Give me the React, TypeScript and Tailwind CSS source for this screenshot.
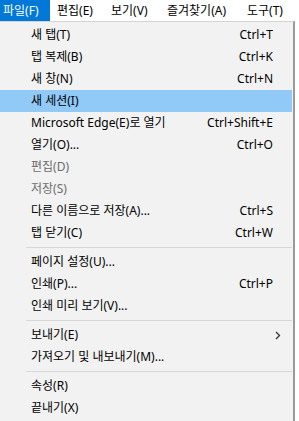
const font = { fontFamily: '"Noto Sans", "Noto Sans CJK KR", sans-serif' }

type Item =
  | { kind: 'item'; label: string; shortcut?: string; disabled?: boolean; active?: boolean; submenu?: boolean }
  | { kind: 'sep' }

const items: Item[] = [
  { kind: 'item', label: '새 탭(T)', shortcut: 'Ctrl+T' },
  { kind: 'item', label: '탭 복제(B)', shortcut: 'Ctrl+K' },
  { kind: 'item', label: '새 창(N)', shortcut: 'Ctrl+N' },
  { kind: 'item', label: '새 세션(I)', active: true },
  { kind: 'item', label: 'Microsoft Edge(E)로 열기', shortcut: 'Ctrl+Shift+E' },
  { kind: 'item', label: '열기(O)...', shortcut: 'Ctrl+O' },
  { kind: 'item', label: '편집(D)', disabled: true },
  { kind: 'item', label: '저장(S)', disabled: true },
  { kind: 'item', label: '다른 이름으로 저장(A)...', shortcut: 'Ctrl+S' },
  { kind: 'item', label: '탭 닫기(C)', shortcut: 'Ctrl+W' },
  { kind: 'sep' },
  { kind: 'item', label: '페이지 설정(U)...' },
  { kind: 'item', label: '인쇄(P)...', shortcut: 'Ctrl+P' },
  { kind: 'item', label: '인쇄 미리 보기(V)...' },
  { kind: 'sep' },
  { kind: 'item', label: '보내기(E)', submenu: true },
  { kind: 'item', label: '가져오기 및 내보내기(M)...' },
  { kind: 'sep' },
  { kind: 'item', label: '속성(R)' },
  { kind: 'item', label: '끝내기(X)' },
]

// menu bar entries with their widths
const menus = [
  { label: '파일(F)', w: 'w-[50px]' },
  { label: '편집(E)', w: 'w-[54px]' },
  { label: '보기(V)', w: 'w-[56px]' },
  { label: '즐겨찾기(A)', w: 'w-[80px]' },
  { label: '도구(T)', w: 'w-[52px]' },
]

export default function App() {
  return (
    <div className="w-[299px] h-[421px] bg-white overflow-hidden text-[12px] text-black" style={font}>
      <div className="flex h-[21px] items-center bg-white">
        {menus.map((m, i) => (
          <div
            key={m.label}
            className={
              'h-full flex items-center shrink-0 ' +
              m.w +
              (i === 0 ? ' pl-[3px] bg-[#0078d7] text-white' : ' pl-[7px]')
            }
          >
            {m.label}
          </div>
        ))}
      </div>
      <div className="w-[295px] bg-[#f2f2f2] border-t border-[#d4d4d4] border-r-2 border-r-[#9a9a9a] pt-[2px] pb-[4px]">
        {items.map((it, i) =>
          it.kind === 'sep' ? (
            <div key={i} className="h-[7px] flex items-center pl-[26px] pr-[1px]">
              <div className="h-px w-full bg-[#d7d7d7]" />
            </div>
          ) : (
            <div
              key={i}
              className={
                'h-[22px] flex items-center pl-[31px] pr-[19px] mr-[1px] ' +
                (it.active ? 'bg-[#91c9f7] ' : '') +
                (it.disabled ? 'text-[#6d6d6d]' : 'text-black')
              }
            >
              <span className="flex-1">{it.label}</span>
              {it.shortcut && <span>{it.shortcut}</span>}
              {it.submenu && (
                <svg width="6" height="9" viewBox="0 0 6 9" className="mr-[-8px]">
                  <path d="M1 1 L4.5 4.5 L1 8" stroke="#333" strokeWidth="1.3" fill="none" />
                </svg>
              )}
            </div>
          )
        )}
      </div>
    </div>
  )
}
